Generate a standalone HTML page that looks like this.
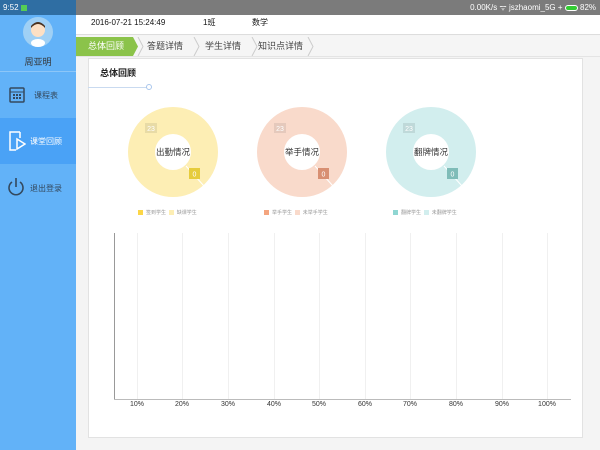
<!DOCTYPE html>
<html><head><meta charset="utf-8"><style>
*{margin:0;padding:0;box-sizing:border-box}
body{width:600px;height:450px;overflow:hidden;background:#f4f4f4;font-family:"Liberation Sans","Noto Sans CJK SC",sans-serif;position:relative}
.abs{position:absolute}
#sb{left:0;top:0;width:76px;height:450px;background:#62b2f8}
#stL{left:0;top:0;width:76px;height:15px;background:#2f6ea3;color:#fff;font-size:8px;line-height:15px;padding-left:3px}
#stR{left:76px;top:0;width:524px;height:15px;background:#7b7b7b;color:#fff;font-size:8px;line-height:15px;text-align:right;padding-right:4px}
#hdr{left:76px;top:15px;width:524px;height:20px;background:#fff;border-bottom:1px solid #ddd;font-size:8px;color:#111;line-height:16px}
.tab{top:37px;height:19px;font-size:9px;color:#444;line-height:19px}
#card{left:88px;top:58px;width:495px;height:380px;background:#fff;border:1px solid #e2e2e2}
.lg{font-size:5px;color:#999;top:209px}
.sq{display:inline-block;width:5px;height:5px;vertical-align:middle;margin-right:3px}
.xl{top:401px;font-size:7px;color:#333;width:30px;text-align:center}
.gl{top:233px;width:1px;height:166px;background:#f0f0f0}
</style></head><body>
<div id="sb" class="abs"></div>
<div id="stL" class="abs">9:52 <span style="display:inline-block;width:6px;height:6px;background:#5c5;vertical-align:middle"></span></div>
<div id="stR" class="abs">0.00K/s ᯤ jszhaomi_5G + <span style="display:inline-block;width:13px;height:6px;border:1px solid #fff;border-radius:3px;background:#3c3;vertical-align:middle"></span> 82%</div>
<svg class="abs" style="left:23px;top:17px" width="30" height="30"><circle cx="15" cy="15" r="15" fill="#9fd0f5"/><circle cx="15" cy="13" r="7" fill="#fde0c4"/><path d="M8 11 Q15 3 22 11 L22 9 Q15 1 8 9Z" fill="#4a3220"/><ellipse cx="15" cy="26" rx="7" ry="4" fill="#fff"/></svg>
<div class="abs" style="left:0;top:55px;width:76px;text-align:center;font-size:9px;color:#333">周亚明</div>
<div class="abs" style="left:0;top:71px;width:76px;height:1px;background:#8cc6f8"></div>
<svg class="abs" style="left:9px;top:87px" width="16" height="16"><rect x="1" y="1" width="14" height="14" rx="1" fill="none" stroke="#34495e" stroke-width="1.5"/><line x1="1" y1="5" x2="15" y2="5" stroke="#34495e"/><g fill="#34495e"><rect x="4" y="7" width="2" height="2"/><rect x="7" y="7" width="2" height="2"/><rect x="10" y="7" width="2" height="2"/><rect x="4" y="10" width="2" height="2"/><rect x="7" y="10" width="2" height="2"/><rect x="10" y="10" width="2" height="2"/></g></svg>
<div class="abs" style="left:34px;top:90px;font-size:8px;color:#34495e">课程表</div>
<div class="abs" style="left:0;top:118px;width:76px;height:46px;background:#4aa2f6"></div>
<svg class="abs" style="left:8px;top:131px" width="18" height="20"><path d="M12 1 H2 V19 H8 M12 1 V7" fill="none" stroke="#fff" stroke-width="1.5"/><path d="M9 8 L17 13 L9 18Z" fill="none" stroke="#fff" stroke-width="1.5"/></svg>
<div class="abs" style="left:30px;top:136px;font-size:8px;color:#fff">课堂回顾</div>
<svg class="abs" style="left:7px;top:177px" width="18" height="20"><path d="M5 5 A7 7 0 1 0 13 5" fill="none" stroke="#34495e" stroke-width="1.6"/><line x1="9" y1="1" x2="9" y2="10" stroke="#34495e" stroke-width="1.6"/></svg>
<div class="abs" style="left:30px;top:183px;font-size:8px;color:#34495e">退出登录</div>
<div id="hdr" class="abs"><span class="abs" style="left:15px">2016-07-21 15:24:49</span><span class="abs" style="left:127px">1班</span><span class="abs" style="left:176px">数学</span></div>
<div class="abs" style="left:76px;top:36px;width:524px;height:21px;background:#f5f5f5;border-bottom:1px solid #e4e4e4"></div>
<svg class="abs" style="left:76px;top:37px" width="245" height="19"><path d="M0 0 H57 L62 9.5 L57 19 H0Z" fill="#8bc34a"/><path d="M62 0 L67 9.5 L62 19 M118 0 L123 9.5 L118 19 M176 0 L181 9.5 L176 19 M232 0 L237 9.5 L232 19" fill="none" stroke="#ccc"/></svg>
<div class="abs tab" style="left:88px;color:#fff">总体回顾</div>
<div class="abs tab" style="left:147px">答题详情</div>
<div class="abs tab" style="left:205px">学生详情</div>
<div class="abs tab" style="left:258px">知识点详情</div>
<div id="card" class="abs"></div>
<div class="abs" style="left:100px;top:66px;font-size:9px;font-weight:bold;color:#222">总体回顾</div>
<div class="abs" style="left:88px;top:87px;width:60px;height:1px;background:#c9daf0"></div>
<div class="abs" style="left:146px;top:84px;width:6px;height:6px;border:1px solid #a9c6ec;border-radius:50%;background:#fff"></div>
<svg class="abs" style="left:100px;top:100px" width="400" height="110" font-family="Liberation Sans,Noto Sans CJK SC,sans-serif">
<g transform="translate(73,52)"><circle r="31.5" fill="none" stroke="#fdeeb4" stroke-width="27"/><line x1="13" y1="14" x2="31" y2="34" stroke="#fff" stroke-width="1"/><rect x="-28" y="-29" width="12" height="10" fill="#e8dba6"/><text x="-22" y="-21" font-size="7" fill="#fff" text-anchor="middle">23</text><rect x="16" y="16" width="11" height="11" fill="#e6cc3c"/><text x="21.5" y="24.5" font-size="7" fill="#fff" text-anchor="middle">0</text><text y="3" font-size="8.5" fill="#333" text-anchor="middle">出勤情况</text></g>
<g transform="translate(202,52)"><circle r="31.5" fill="none" stroke="#f9dacb" stroke-width="27"/><line x1="13" y1="14" x2="31" y2="34" stroke="#fff" stroke-width="1"/><rect x="-28" y="-29" width="12" height="10" fill="#e5c9bc"/><text x="-22" y="-21" font-size="7" fill="#fff" text-anchor="middle">23</text><rect x="16" y="16" width="11" height="11" fill="#d88f72"/><text x="21.5" y="24.5" font-size="7" fill="#fff" text-anchor="middle">0</text><text y="3" font-size="8.5" fill="#333" text-anchor="middle">举手情况</text></g>
<g transform="translate(331,52)"><circle r="31.5" fill="none" stroke="#d2eeee" stroke-width="27"/><line x1="13" y1="14" x2="31" y2="34" stroke="#fff" stroke-width="1"/><rect x="-28" y="-29" width="12" height="10" fill="#bfd9d9"/><text x="-22" y="-21" font-size="7" fill="#fff" text-anchor="middle">23</text><rect x="16" y="16" width="11" height="11" fill="#7fbcb8"/><text x="21.5" y="24.5" font-size="7" fill="#fff" text-anchor="middle">0</text><text y="3" font-size="8.5" fill="#333" text-anchor="middle">翻牌情况</text></g>
</svg>
<div class="abs lg" style="left:138px"><span class="sq" style="background:#fcd647"></span>签到学生 &nbsp;<span class="sq" style="background:#fdeeb4"></span>缺课学生</div>
<div class="abs lg" style="left:264px"><span class="sq" style="background:#f4a57f"></span>举手学生 &nbsp;<span class="sq" style="background:#f9dacb"></span>未举手学生</div>
<div class="abs lg" style="left:393px"><span class="sq" style="background:#8fd6d2"></span>翻牌学生 &nbsp;<span class="sq" style="background:#d2eeee"></span>未翻牌学生</div>
<div class="abs" style="left:114px;top:233px;width:1px;height:167px;background:#999"></div>
<div class="abs" style="left:114px;top:399px;width:457px;height:1px;background:#bbb"></div>
<div class="abs gl" style="left:137px"></div><div class="abs gl" style="left:182px"></div><div class="abs gl" style="left:228px"></div><div class="abs gl" style="left:274px"></div><div class="abs gl" style="left:319px"></div><div class="abs gl" style="left:365px"></div><div class="abs gl" style="left:410px"></div><div class="abs gl" style="left:456px"></div><div class="abs gl" style="left:502px"></div><div class="abs gl" style="left:547px"></div>
<div class="abs xl" style="left:122px">10%</div><div class="abs xl" style="left:167px">20%</div><div class="abs xl" style="left:213px">30%</div><div class="abs xl" style="left:259px">40%</div><div class="abs xl" style="left:304px">50%</div><div class="abs xl" style="left:350px">60%</div><div class="abs xl" style="left:395px">70%</div><div class="abs xl" style="left:441px">80%</div><div class="abs xl" style="left:487px">90%</div><div class="abs xl" style="left:532px">100%</div>
</body></html>
